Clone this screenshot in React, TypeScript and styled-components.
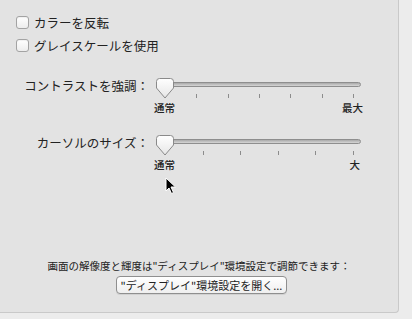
import * as React from "react";
import styled, { createGlobalStyle } from "styled-components";

const GlobalStyle = createGlobalStyle`
  html, body {
    margin: 0;
    padding: 0;
    background: #ececec;
  }
  body {
    font-family: "Noto Sans CJK JP", "Liberation Sans", sans-serif;
    color: #222;
    width: 412px;
    height: 319px;
    overflow: hidden;
  }
`;

const Panel = styled.div`
  position: relative;
  width: 399px;
  height: 313px;
  box-sizing: border-box;
  background: #e3e3e3;
  border-right: 1px solid #c9c9c9;
  border-bottom: 1px solid #c9c9c9;
  border-bottom-right-radius: 4px;
  display: flex;
  flex-direction: column;
  padding: 11px 0 18px 0;
`;

const CheckRow = styled.label`
  display: flex;
  align-items: center;
  height: 23px;
  padding-left: 16px;
  font-size: 12.5px;
`;

const Box = styled.span`
  width: 11px;
  height: 11px;
  border: 1px solid #a3a3a3;
  border-radius: 3px;
  background: linear-gradient(#ffffff, #ededed);
  margin-right: 5px;
  box-shadow: inset 0 1px 1px rgba(0, 0, 0, 0.06);
`;

const SliderRow = styled.div<{ $top: number }>`
  display: flex;
  align-items: flex-start;
  margin-top: ${(p) => p.$top}px;
`;

const RowLabel = styled.div`
  width: 149px;
  text-align: right;
  font-size: 12.5px;
  line-height: 16px;
  flex-shrink: 0;
`;

const SliderBox = styled.div`
  position: relative;
  width: 212px;
  margin-left: 7px;
`;

const Track = styled.div`
  margin: 4px 0 0 8px;
  width: 197px;
  height: 5px;
  box-sizing: border-box;
  border: 1px solid #8e8e8e;
  border-radius: 3px;
  background: linear-gradient(#a9a9a9, #d6d6d6);
`;

const Thumb = styled.svg`
  position: absolute;
  left: 0;
  top: 0;
`;

const Ticks = styled.div`
  display: flex;
  justify-content: space-between;
  margin: 7px 0 0 9px;
  width: 189px;
  height: 4px;
`;

const Tick = styled.span`
  width: 1px;
  height: 4px;
  background: #8c8c8c;
`;

const Labels = styled.div<{ $right: number }>`
  display: flex;
  justify-content: space-between;
  margin-top: 3px;
  width: ${(p) => 209 - p.$right}px;
  margin-left: -2px;
  font-size: 10.5px;
  line-height: 13px;
  font-weight: 500;
`;

const Bottom = styled.div`
  margin-top: auto;
  display: flex;
  flex-direction: column;
  align-items: center;
`;

const Note = styled.div`
  font-size: 10.5px;
  line-height: 14px;
  margin-bottom: 3px;
`;

const Button = styled.button`
  height: 18px;
  width: 171px;
  padding: 0;
  font-family: inherit;
  font-size: 11px;
  color: #222;
  background: linear-gradient(#ffffff, #efefef);
  border: 1px solid #8f8f8f;
  border-radius: 4px;
  box-shadow: 0 1px 0 rgba(0, 0, 0, 0.08);
  margin-left: 5px;
`;

const Cursor = styled.svg`
  position: absolute;
  left: 165px;
  top: 177px;
`;

const SliderThumb = () => (
  <Thumb width="18" height="21" viewBox="0 0 18 21">
    <defs>
      <linearGradient id="tg" x1="0" y1="0" x2="0" y2="1">
        <stop offset="0" stopColor="#ffffff" />
        <stop offset="1" stopColor="#e6e6e6" />
      </linearGradient>
    </defs>
    <path
      d="M3.5 0.5 H14.5 Q17.5 0.5 17.5 3.5 V10 L9 20 L0.5 10 V3.5 Q0.5 0.5 3.5 0.5 Z"
      fill="url(#tg)"
      stroke="#8a8a8a"
    />
  </Thumb>
);

type SliderProps = {
  label: string;
  ticks: number;
  maxLabel: string;
  top: number;
  right: number;
};

const Slider = ({ label, ticks, maxLabel, top, right }: SliderProps) => (
  <SliderRow $top={top}>
    <RowLabel>{label}</RowLabel>
    <SliderBox>
      <Track />
      <SliderThumb />
      <Ticks>
        {Array.from({ length: ticks }).map((_, i) => (
          <Tick key={i} />
        ))}
      </Ticks>
      <Labels $right={right}>
        <span>通常</span>
        <span>{maxLabel}</span>
      </Labels>
    </SliderBox>
  </SliderRow>
);

const App: React.FC = () => {
  return (
    <>
      <GlobalStyle />
      <Panel>
        <CheckRow>
          <Box />
          カラーを反転
        </CheckRow>
        <CheckRow>
          <Box />
          グレイスケールを使用
        </CheckRow>
        <Slider label="コントラストを強調：" ticks={7} maxLabel="最大" top={21} right={0} />
        <Slider label="カーソルのサイズ：" ticks={6} maxLabel="大" top={21} right={3} />
        <Bottom>
          <Note>画面の解像度と輝度は"ディスプレイ"環境設定で調節できます：</Note>
          <Button>"ディスプレイ"環境設定を開く...</Button>
        </Bottom>
        <Cursor width="12" height="18" viewBox="0 0 12 18">
          <path
            d="M1 1 L1 14 L4 11 L6.5 16.5 L8.5 15.5 L6 10 L10.5 10 Z"
            fill="#000"
            stroke="#fff"
            strokeWidth="1"
            strokeLinejoin="round"
          />
        </Cursor>
      </Panel>
    </>
  );
};

export default App;
